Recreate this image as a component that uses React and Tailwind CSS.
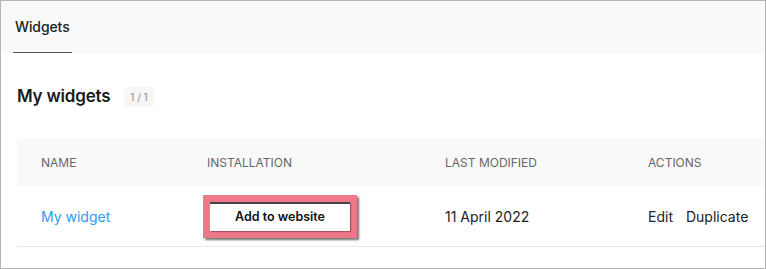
export default function App() {
  const headers = [
    { label: 'Name', w: 'w-[166px]' },
    { label: 'Installation', w: 'w-[238px]' },
    { label: 'Last modified', w: 'w-[203px]' },
    { label: 'Actions', w: 'flex-1' },
  ];

  return (
    <div className="w-[766px] h-[269px] border border-[#b5b5b5] bg-white overflow-hidden font-['Inter',sans-serif] text-[#222]">
      {/* tab bar */}
      <div className="h-[52px] bg-[#f9f9f9] flex items-end px-[12px]">
        <div className="px-[2px] h-full flex items-center border-b border-[#555] text-[14px] font-medium tracking-[-0.1px]">
          Widgets
        </div>
      </div>

      <div className="pl-[16px]">
        <div className="flex items-center h-[86px] pt-[2px]">
          <h1 className="text-[17px] font-semibold text-[#1a1a1a] tracking-[-0.2px]">My widgets</h1>
          <span className="ml-[14px] h-[20px] px-[6px] rounded-[4px] bg-[#f6f6f6] text-[10px] text-[#888] flex items-center">
            1 / 1
          </span>
        </div>

        <div className="bg-[#f9f9f9] h-[47px] flex items-center pl-[24px] text-[12px] text-[#666] uppercase">
          {headers.map((h) => (
            <div key={h.label} className={h.w}>{h.label}</div>
          ))}
        </div>

        <div className="h-[61px] flex items-center pl-[24px] border-b border-[#e8e8e8] text-[14px]">
          <div className="w-[162px] text-[#2e9bf0]">My widget</div>
          <div className="w-[242px]">
            <div className="inline-flex p-[7px] bg-[#ee7789] shadow-[2px_2px_2px_rgba(0,0,0,0.55)]">
              <button className="w-[140px] h-[29px] bg-white border-t-2 border-[#444] text-[12.5px] font-semibold text-[#111] shadow-[1px_1px_1px_rgba(0,0,0,0.3)]">
                Add to website
              </button>
            </div>
          </div>
          <div className="w-[203px]">11 April 2022</div>
          <div className="flex gap-[13px]">
            <span>Edit</span>
            <span>Duplicate</span>
          </div>
        </div>
      </div>
    </div>
  );
}
